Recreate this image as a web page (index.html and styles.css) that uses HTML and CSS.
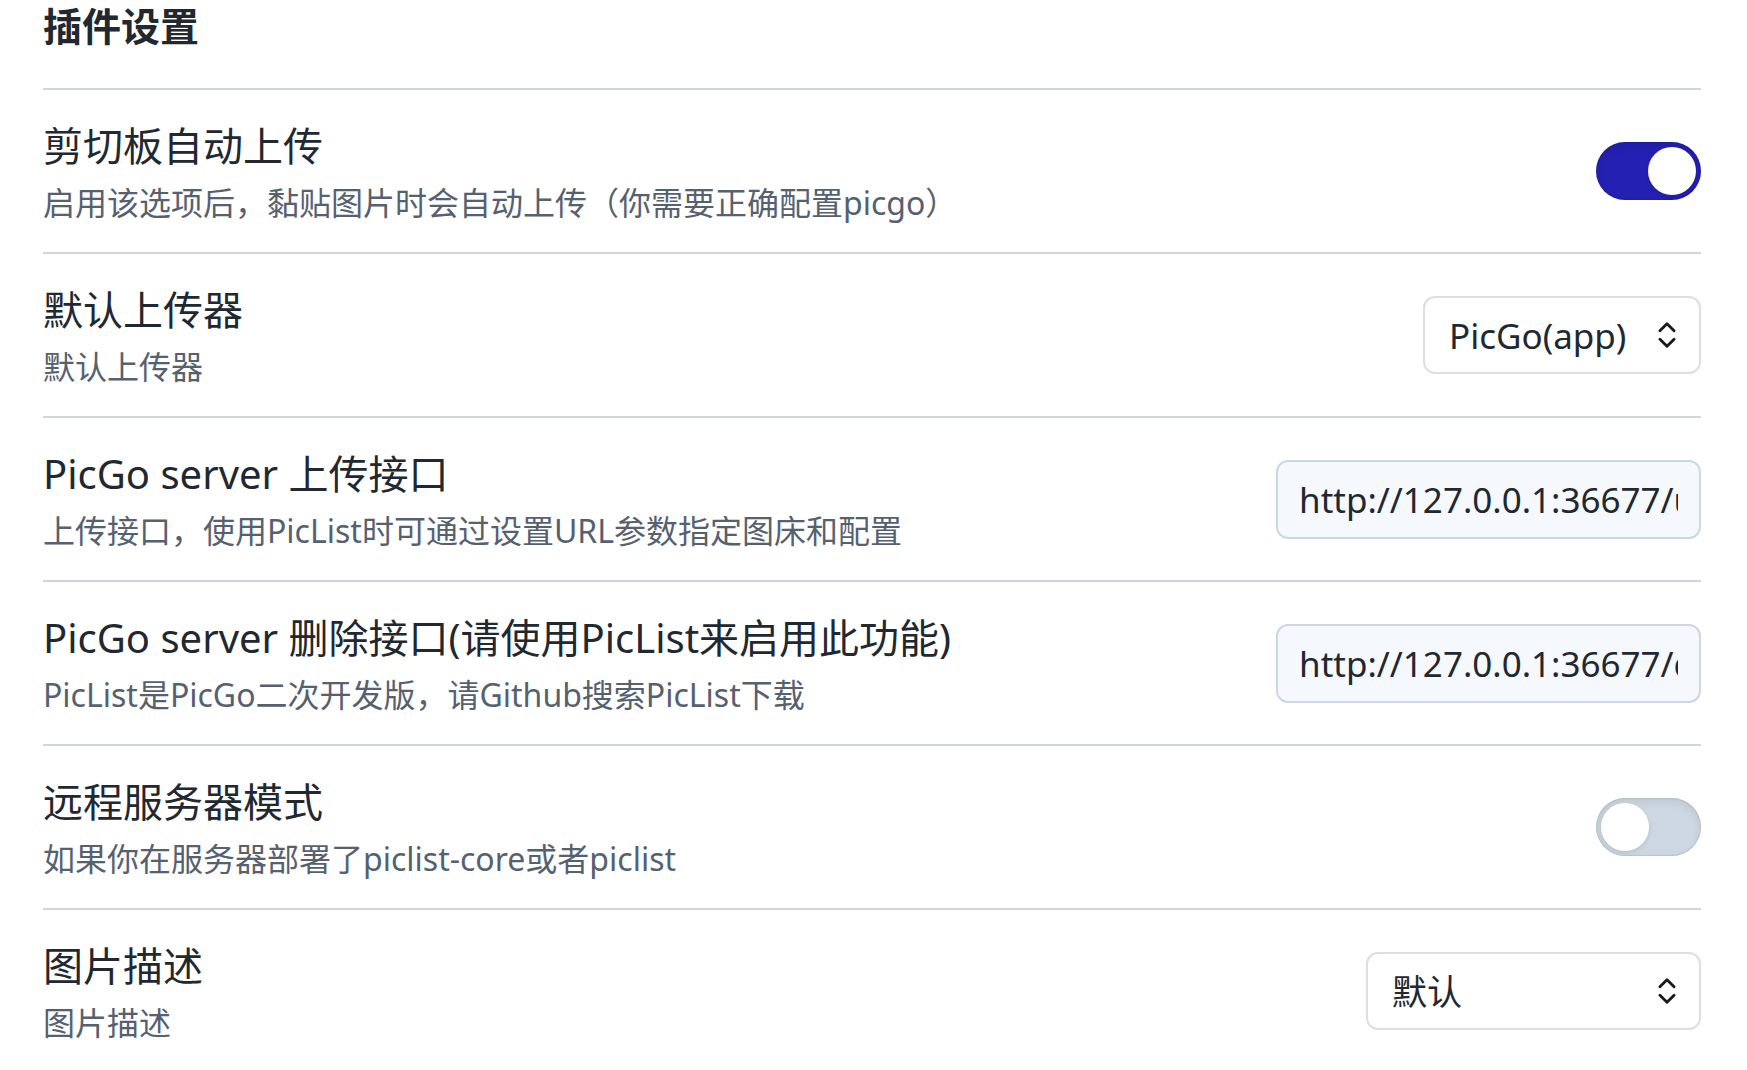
FILE: index.html
```html
<!DOCTYPE html>
<html lang="zh-CN">
<head>
<meta charset="utf-8">
<meta name="viewport" content="width=device-width, initial-scale=1">
<title>插件设置</title>
<link rel="stylesheet" href="styles.css">
</head>
<body>
<main class="settings">
  <h1 class="heading">插件设置</h1>
  <div class="row">
    <div class="info">
      <label class="name" for="auto">剪切板自动上传</label>
      <p class="desc">启用该选项后，黏贴图片时会自动上传（你需要正确配置picgo）</p>
    </div>
    <input class="toggle" type="checkbox" id="auto" checked>
  </div>
  <div class="row">
    <div class="info">
      <label class="name" for="uploader">默认上传器</label>
      <p class="desc">默认上传器</p>
    </div>
    <div class="picker">
      <select class="select" id="uploader"><option>PicGo(app)</option></select>
      <svg class="chevrons" viewBox="0 0 24 24" aria-hidden="true"><path d="m7 15 5 5 5-5"/><path d="m7 9 5-5 5 5"/></svg>
    </div>
  </div>
  <div class="row">
    <div class="info">
      <label class="name" for="upload-url">PicGo server 上传接口</label>
      <p class="desc">上传接口，使用PicList时可通过设置URL参数指定图床和配置</p>
    </div>
    <input class="field" type="text" id="upload-url" value="http://127.0.0.1:36677/upload">
  </div>
  <div class="row">
    <div class="info">
      <label class="name" for="delete-url">PicGo server 删除接口(请使用PicList来启用此功能)</label>
      <p class="desc">PicList是PicGo二次开发版，请Github搜索PicList下载</p>
    </div>
    <input class="field" type="text" id="delete-url" value="http://127.0.0.1:36677/delete">
  </div>
  <div class="row">
    <div class="info">
      <label class="name" for="remote">远程服务器模式</label>
      <p class="desc">如果你在服务器部署了piclist-core或者piclist</p>
    </div>
    <input class="toggle" type="checkbox" id="remote">
  </div>
  <div class="row">
    <div class="info">
      <label class="name" for="image-desc">图片描述</label>
      <p class="desc">图片描述</p>
    </div>
    <div class="picker">
      <select class="select select-wide" id="image-desc"><option>默认</option></select>
      <svg class="chevrons" viewBox="0 0 24 24" aria-hidden="true"><path d="m7 15 5 5 5-5"/><path d="m7 9 5-5 5 5"/></svg>
    </div>
  </div>
</main>
</body>
</html>
```
FILE: styles.css
```css
* { box-sizing: border-box; }
body {
  margin: 0;
  background: #fff;
  color: #212830;
  font-family: "Noto Sans", "Noto Sans CJK SC", sans-serif;
}
.settings { padding: 0 46px 0 43px; }
.heading {
  margin: 0;
  padding: 0 0 36px;
  font-size: 39px;
  line-height: 52px;
  font-weight: 700;
}
.row {
  display: flex;
  align-items: center;
  justify-content: space-between;
  gap: 40px;
  padding: 24px 0;
  border-top: 2px solid #cdd7e2;
}
.info { display: flex; flex-direction: column; }
.name { font-size: 40px; line-height: 64px; }
.desc { margin: 0; color: #566170; font-size: 32px; line-height: 50px; }
.toggle {
  appearance: none;
  flex: none;
  display: flex;
  align-items: center;
  width: 105px;
  height: 58px;
  margin: 0;
  padding: 0 5px;
  border-radius: 29px;
  background: #cdd7e1;
  box-shadow: inset 0 4px 10px rgba(0, 0, 0, 0.07), inset 0 0 2px rgba(0, 0, 0, 0.25);
}
.toggle::before {
  content: "";
  width: 48px;
  height: 48px;
  border-radius: 50%;
  background: #fff;
  box-shadow: 0 2px 4px rgba(0, 0, 0, 0.1);
}
.toggle:checked {
  justify-content: flex-end;
  background: #2420b2;
}
.picker { display: grid; flex: none; align-items: center; }
.select, .chevrons { grid-area: 1 / 1; }
.select {
  appearance: none;
  width: 278px;
  height: 78px;
  padding: 0 24px;
  border: 2px solid #dedede;
  border-radius: 12px;
  background: #fff;
  color: inherit;
  font: inherit;
  font-size: 35px;
}
.select-wide { width: 335px; }
.chevrons {
  justify-self: end;
  width: 34px;
  height: 34px;
  margin-right: 17px;
  fill: none;
  stroke: #1a1a1a;
  stroke-width: 2;
  stroke-linecap: round;
  stroke-linejoin: round;
  pointer-events: none;
}
.field {
  flex: none;
  width: 425px;
  height: 79px;
  padding: 0 21px;
  border: 2px solid #cdd7e2;
  border-radius: 12px;
  background: #f5f8fc;
  color: inherit;
  font: inherit;
  font-size: 35px;
}
```
